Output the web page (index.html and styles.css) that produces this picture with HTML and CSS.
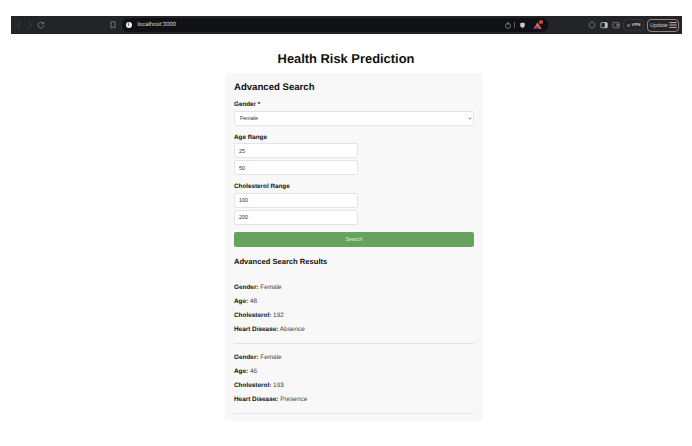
FILE: index.html
```html
<!DOCTYPE html>
<html lang="en">
<head>
<meta charset="utf-8">
<title>Health Risk Prediction</title>
<link rel="stylesheet" href="styles.css">
</head>
<body>
<header class="browser">
  <div class="nav">
    <svg class="ic dim" viewBox="0 0 10 10"><path d="M6.5 1.5 3 5l3.5 3.5"/></svg>
    <svg class="ic dim" viewBox="0 0 10 10"><path d="M3.5 1.5 7 5 3.5 8.5"/></svg>
    <svg class="ic" viewBox="0 0 10 10"><path d="M8 3.2A3.6 3.6 0 1 0 8.6 5.4M8.4 1.2v2.3H6.1"/></svg>
  </div>
  <svg class="ic bookmark" viewBox="0 0 10 10"><path d="M2.5 1h5v8L5 7.2 2.5 9z"/></svg>
  <div class="address">
    <span class="info">i</span>
    <span class="url">localhost:3000</span>
    <span class="addr-icons">
      <svg class="ic" viewBox="0 0 10 10"><circle cx="5" cy="6" r="3.2"/><path d="M5 1v4"/></svg>
      <i class="sep"></i>
      <svg class="shield" viewBox="0 0 10 10"><path d="M1.5 2 3.5 1h3l2 1-.6 4L5 9 2.1 6z"/></svg>
      <span class="rewards">
        <svg viewBox="0 0 10 10"><path class="tri-a" d="M5 1.5 9.5 9h-9z"/><path class="tri-b" d="M5 5.5 7 9H0.5z"/></svg>
        <b class="badge"></b>
      </span>
    </span>
  </div>
  <div class="tools">
    <svg class="ic" viewBox="0 0 10 10"><path d="M3.5 1.5h3l2 2v3l-2 2h-3l-2-2v-3z"/></svg>
    <svg class="ic strong" viewBox="0 0 10 10"><rect x="1" y="2" width="8" height="6.5" rx="1"/><path class="fill" d="M6 2h3v6.5H6z"/></svg>
    <svg class="ic" viewBox="0 0 10 10"><rect x="1" y="2" width="8" height="6.5" rx="1.4"/><path d="M6 4.2h3v2.2H6z"/></svg>
    <span class="vpn"><i></i>VPN</span>
    <span class="update">Update
      <svg viewBox="0 0 10 10"><path d="M.5 2h9M.5 5h9M.5 8h9"/></svg>
    </span>
  </div>
</header>

<h1 class="page-title">Health Risk Prediction</h1>

<main class="card">
  <h2 class="card-title">Advanced Search</h2>
  <form class="form">
    <div class="field">
      <label class="label" for="gender">Gender *</label>
      <div class="select-wrap">
        <select class="control select" id="gender"><option>Female</option><option>Male</option></select>
        <svg class="chevron" viewBox="0 0 6 4"><path d="M.8.8 3 3 5.2.8"/></svg>
      </div>
    </div>
    <div class="field">
      <span class="label">Age Range</span>
      <input class="control range" value="25" aria-label="Minimum age">
      <input class="control range" value="50" aria-label="Maximum age">
    </div>
    <div class="field">
      <span class="label">Cholesterol Range</span>
      <input class="control range" value="100" aria-label="Minimum cholesterol">
      <input class="control range" value="200" aria-label="Maximum cholesterol">
    </div>
    <button class="submit" type="button">Search</button>
  </form>

  <h3 class="results-title">Advanced Search Results</h3>
  <div class="results">
    <article class="result">
      <p><strong>Gender:</strong> Female</p>
      <p><strong>Age:</strong> 48</p>
      <p><strong>Cholesterol:</strong> 192</p>
      <p><strong>Heart Disease:</strong> Absence</p>
    </article>
    <article class="result">
      <p><strong>Gender:</strong> Female</p>
      <p><strong>Age:</strong> 46</p>
      <p><strong>Cholesterol:</strong> 193</p>
      <p><strong>Heart Disease:</strong> Presence</p>
    </article>
  </div>
</main>
</body>
</html>
```
FILE: styles.css
```css
* { box-sizing: border-box; }
html, body { height: 100%; }
body {
  margin: 0;
  overflow: hidden;
  background: #fff;
  padding-top: 16px;
  font-family: "Liberation Sans", Arial, sans-serif;
  color: #222;
  text-rendering: geometricPrecision;
}
.browser {
  height: 18px;
  margin: 0 10px 0 11px;
  background: #232428;
  display: flex;
  align-items: center;
  color: #c9c9cc;
}
.ic { width: 8px; height: 8px; fill: none; stroke: #85868b; stroke-width: 1; flex: none; }
.ic.dim { stroke: #4c4d51; }
.nav { display: flex; gap: 3px; margin-left: 4px; width: 94px; flex: none; }
.bookmark { margin-right: 5px; }
.address {
  width: 426px;
  height: 14px;
  flex: none;
  background: #101115;
  border-radius: 6px;
  display: flex;
  align-items: center;
  padding: 0 6.5px 0 3.5px;
}
.info {
  width: 6px; height: 6px; border-radius: 50%;
  background: #f2f2f2; color: #111;
  font-size: 5px; line-height: 6px; text-align: center; font-weight: 700;
}
.url { margin-left: 6px; font-size: 6px; color: #d8d8da; }
.addr-icons { margin-left: auto; display: flex; align-items: center; gap: 4px; }
.sep { width: 1px; height: 6px; background: #5a5b60; margin-left: -2.5px; }
.shield { width: 7px; height: 7px; fill: #c9c9cc; }
.rewards { position: relative; width: 9px; height: 9px; margin-left: 3px; }
.rewards svg { width: 9px; height: 9px; display: block; }
.tri-a { fill: #f0683a; }
.tri-b { fill: #5a2bb8; }
.badge { position: absolute; top: -1px; right: -1px; width: 4px; height: 4px; border-radius: 50%; background: #e8452c; }
.tools { flex: 1; display: flex; align-items: center; justify-content: flex-end; gap: 4px; padding-right: 3px; }
.ic.strong { stroke: #c4c4c7; }
.fill { fill: #c4c4c7; stroke: none; }
.vpn {
  width: 21px; height: 12px; padding-left: 3px; border: 1px solid #35363b; border-radius: 4px;
  font-size: 4.4px; line-height: 10px; font-weight: 700; color: #c9c9cc;
  display: flex; align-items: center; gap: 1.5px; margin-left: -1px;
}
.vpn i { width: 3px; height: 3px; border-radius: 50%; border: 1px solid #9a9ba0; }
.update {
  width: 32px; height: 13px; padding: 1px 0 0 2px; border: 1px solid #9b7f7a; border-radius: 4px;
  font-size: 5.5px; line-height: 10px; color: #d3c5c3; margin-left: -1px;
  display: flex; align-items: center; gap: 1px;
}
.update svg { width: 8px; height: 8px; margin-top: -1px; fill: none; stroke: #e0dcdb; stroke-width: 1; }
.page-title {
  margin: 18px 0 0;
  text-align: center;
  font-size: 12.9px;
  line-height: 13px;
  font-weight: 700;
  color: #111;
}
.card {
  width: 258px;
  margin: 8px 0 0 225px;
  padding: 9px 9px 0;
  height: 348px;
  background: #f8f8f8;
  border-radius: 3px 3px 0 0;
}
.card-title { margin: 0; font-size: 9.6px; line-height: 12px; font-weight: 700; color: #111; }
.form { display: flex; flex-direction: column; }
.field { display: flex; flex-direction: column; margin-top: 8px; }
.field:first-child { margin-top: 7px; }
.label { font-size: 6.3px; line-height: 8px; font-weight: 700; color: #111; margin-bottom: 1.5px; }
.control {
  height: 15px;
  background: #fff;
  border: 1px solid #e4e4e4;
  border-radius: 2px;
  padding: 0 4px;
  font: 5.4px "Liberation Sans", Arial, sans-serif;
  color: #333;
  outline: none;
}
.select-wrap { position: relative; }
.select { width: 100%; display: block; padding: 0 5px; appearance: none; }
.chevron {
  position: absolute; right: 2px; top: 6px;
  width: 4px; height: 3px;
  fill: none; stroke: #444; stroke-width: 1;
}
.range { width: 124px; margin-bottom: 2px; }
.range:last-child { margin-bottom: 0; }
.submit {
  height: 14.5px;
  margin-top: 7.5px;
  border: 0;
  border-radius: 2px;
  background: #66a35c;
  color: #dfeedd;
  font: 5.4px "Liberation Sans", Arial, sans-serif;
}
.results-title { margin: 9px 0 0; font-size: 7.6px; line-height: 11px; font-weight: 700; color: #111; }
.results { margin-top: 17px; }
.result { border-bottom: 1px solid #e2e2e2; padding-bottom: 9px; margin-bottom: 10px; }
.result p { margin: 0 0 6px; font-size: 6.4px; line-height: 8px; color: #444; }
.result p:last-child { margin-bottom: 0; }
.result strong { color: #111; }
```
